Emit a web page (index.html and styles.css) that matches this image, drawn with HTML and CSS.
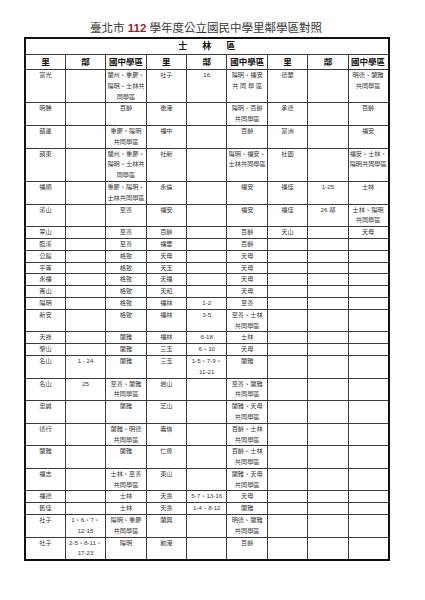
FILE: index.html
```html
<!DOCTYPE html>
<html lang="zh-Hant">
<head>
<meta charset="utf-8">
<title>臺北市112學年度公立國民中學里鄰學區對照</title>
<link rel="stylesheet" href="styles.css">
</head>
<body>
<div class="page">
  <h1 class="title">臺北市 <span class="year">112</span> 學年度公立國民中學里鄰學區對照</h1>
  <table class="grid">
    <colgroup>
      <col class="c"><col class="c"><col class="c"><col class="c"><col class="c"><col class="c"><col class="c"><col class="c"><col class="c">
    </colgroup>
    <thead>
      <tr class="district"><th colspan="9"><span class="spaced">士林區</span></th></tr>
      <tr class="head"><th>里</th><th>鄰</th><th>國中學區</th><th>里</th><th>鄰</th><th>國中學區</th><th>里</th><th>鄰</th><th>國中學區</th></tr>
    </thead>
    <tbody>
      <tr><td>富光</td><td></td><td>蘭州、重慶、<br>陽明、士林共<br>同學區</td><td>社子</td><td>16</td><td>陽明、福安<br>共 同 學 區</td><td>德華</td><td></td><td>明德、蘭雅<br>共同學區</td></tr>
      <tr><td>明勝</td><td></td><td>百齡</td><td>後港</td><td></td><td>陽明、百齡<br>共同學區</td><td>承德</td><td></td><td>百齡</td></tr>
      <tr><td>葫蘆</td><td></td><td>重慶、陽明<br>共同學區</td><td>福中</td><td></td><td>百齡</td><td>富洲</td><td></td><td>福安</td></tr>
      <tr><td>葫東</td><td></td><td>蘭州、重慶、<br>陽明、士林共<br>同學區</td><td>社新</td><td></td><td>陽明、福安、<br>士林共同學區</td><td>社園</td><td></td><td>福安、士林、<br>陽明共同學區</td></tr>
      <tr><td>福順</td><td></td><td>重慶、陽明、<br>士林共同學區</td><td>永倫</td><td></td><td>福安</td><td>福佳</td><td>1-25</td><td>士林</td></tr>
      <tr><td>溪山</td><td></td><td>至善</td><td>福安</td><td></td><td>福安</td><td>福佳</td><td>26 鄰</td><td>士林、陽明<br>共同學區</td></tr>
      <tr><td>翠山</td><td></td><td>至善</td><td>百齡</td><td></td><td>百齡</td><td>天山</td><td></td><td>天母</td></tr>
      <tr><td>臨溪</td><td></td><td>至善</td><td>福華</td><td></td><td>百齡</td><td></td><td></td><td></td></tr>
      <tr><td>公館</td><td></td><td>格致</td><td>天母</td><td></td><td>天母</td><td></td><td></td><td></td></tr>
      <tr><td>平等</td><td></td><td>格致</td><td>天玉</td><td></td><td>天母</td><td></td><td></td><td></td></tr>
      <tr><td>永福</td><td></td><td>格致</td><td>天福</td><td></td><td>天母</td><td></td><td></td><td></td></tr>
      <tr><td>菁山</td><td></td><td>格致</td><td>天和</td><td></td><td>天母</td><td></td><td></td><td></td></tr>
      <tr><td>陽明</td><td></td><td>格致</td><td>福林</td><td>1-2</td><td>至善</td><td></td><td></td><td></td></tr>
      <tr><td>新安</td><td></td><td>格致</td><td>福林</td><td>3-5</td><td>至善、士林<br>共同學區</td><td></td><td></td><td></td></tr>
      <tr><td>天祿</td><td></td><td>蘭雅</td><td>福林</td><td>6-18</td><td>士林</td><td></td><td></td><td></td></tr>
      <tr><td>聖山</td><td></td><td>蘭雅</td><td>三玉</td><td>6、10</td><td>天母</td><td></td><td></td><td></td></tr>
      <tr><td>名山</td><td>1 - 24</td><td>蘭雅</td><td>三玉</td><td>1-5、7-9、<br>11-21</td><td>蘭雅</td><td></td><td></td><td></td></tr>
      <tr><td>名山</td><td>25</td><td>至善、蘭雅<br>共同學區</td><td>岩山</td><td></td><td>至善、蘭雅<br>共同學區</td><td></td><td></td><td></td></tr>
      <tr><td>忠誠</td><td></td><td>蘭雅</td><td>芝山</td><td></td><td>蘭雅、天母<br>共同學區</td><td></td><td></td><td></td></tr>
      <tr><td>德行</td><td></td><td>蘭雅、明德<br>共同學區</td><td>義信</td><td></td><td>百齡、士林<br>共同學區</td><td></td><td></td><td></td></tr>
      <tr><td>蘭雅</td><td></td><td>蘭雅</td><td>仁勇</td><td></td><td>百齡、士林<br>共同學區</td><td></td><td></td><td></td></tr>
      <tr><td>福志</td><td></td><td>士林、至善<br>共同學區</td><td>東山</td><td></td><td>蘭雅、天母<br>共同學區</td><td></td><td></td><td></td></tr>
      <tr><td>福德</td><td></td><td>士林</td><td>天壽</td><td>5-7、13-16</td><td>天母</td><td></td><td></td><td></td></tr>
      <tr><td>舊佳</td><td></td><td>士林</td><td>天壽</td><td>1-4、8-12</td><td>蘭雅</td><td></td><td></td><td></td></tr>
      <tr><td>社子</td><td>1、6、7、<br>12-15</td><td>陽明、重慶<br>共同學區</td><td>蘭興</td><td></td><td>明德、蘭雅<br>共同學區</td><td></td><td></td><td></td></tr>
      <tr><td>社子</td><td>2-5、8-11、<br>17-23</td><td>陽明</td><td>前港</td><td></td><td>百齡</td><td></td><td></td><td></td></tr>
    </tbody>
  </table>
</div>
</body>
</html>
```
FILE: styles.css
```css
html, body {
  margin: 0;
  padding: 0;
  background: #ffffff;
}

body {
  font-family: "Liberation Sans", "Noto Sans CJK TC", sans-serif;
  color: #333333;
}

.page {
  width: 364px;
  margin-left: 24px;
}

.title {
  margin: 0;
  padding-top: 20px;
  height: 16px;
  line-height: 16px;
  font-size: 11.5px;
  font-weight: normal;
  text-align: center;
  color: #3a3a3a;
  white-space: nowrap;
}

.year {
  color: #a01d22;
  font-weight: bold;
}

.grid {
  width: 364px;
  margin-top: 1px;
  border-collapse: collapse;
  table-layout: fixed;
  border: 2px solid #111111;
}

.grid .c {
  width: 40.4px;
}

.grid th,
.grid td {
  border: 1px solid #3c3c3c;
  padding: 0 1px;
  text-align: center;
  white-space: nowrap;
  overflow: hidden;
}

.grid td {
  font-size: 6.2px;
  line-height: 10.8px;
  vertical-align: top;
  color: #383838;
}

.district th {
  font-size: 9px;
  line-height: 14.6px;
  font-weight: bold;
  color: #111111;
}

.spaced {
  letter-spacing: 15px;
  padding-left: 15px;
}

.head th {
  font-size: 8.5px;
  line-height: 14.4px;
  font-weight: bold;
  color: #111111;
  vertical-align: middle;
}
```
